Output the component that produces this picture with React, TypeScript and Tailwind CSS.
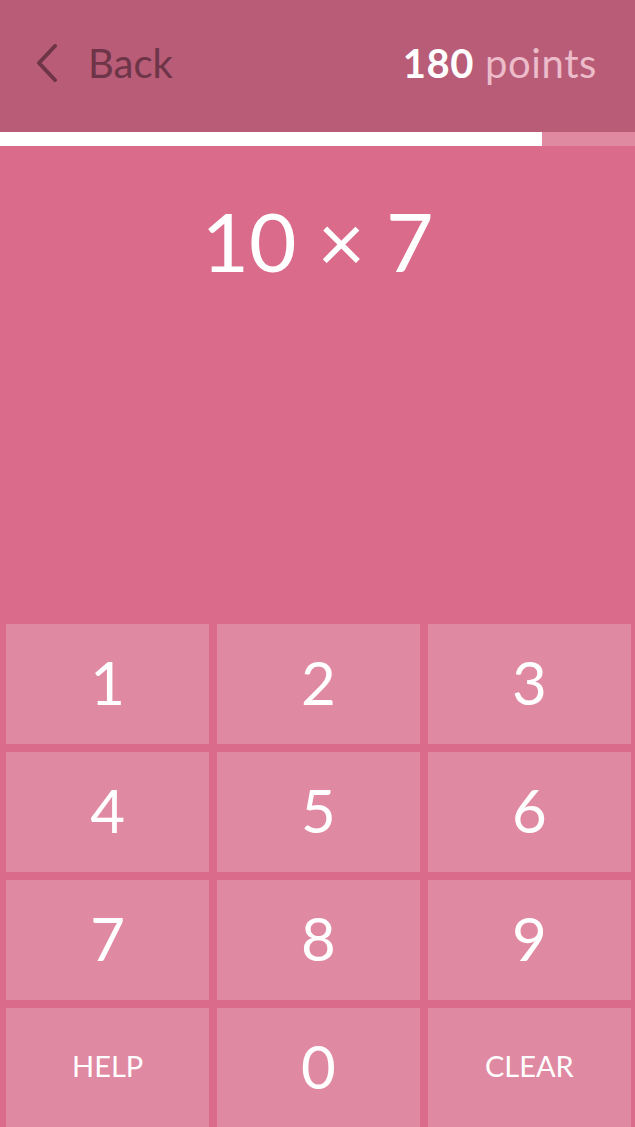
const KEYS = ["1", "2", "3", "4", "5", "6", "7", "8", "9", "HELP", "0", "CLEAR"];

const App = () => {
  return (
    <div
      className="h-[1127px] w-[635px] overflow-hidden bg-[#da6b8b]"
      style={{ fontFamily: "Lato, 'Open Sans', sans-serif" }}
    >
      {/* HEADER */}
      <div className="flex h-[132px] items-center justify-between bg-[#b85c77] pl-[35px] pr-[38px] pb-[6px]">
        <div className="flex items-center gap-[29px] text-[#6e3447]">
          <svg width="24" height="38" viewBox="0 0 24 38" fill="none">
            <path d="M20 2 L4 19 L20 36" stroke="#6e3447" strokeWidth="4" strokeLinecap="round" strokeLinejoin="round" />
          </svg>
          <span className="text-[40px] leading-none">Back</span>
        </div>
        <div className="text-[40px] leading-none tracking-[0.6px]">
          <span className="font-bold text-white">180</span>{" "}
          <span className="text-[#ecbccb]">points</span>
        </div>
      </div>

      {/* PROGRESS */}
      <div className="flex h-[14px] bg-[#e08aa2]">
        <div className="h-full w-[542px] bg-white" />
      </div>

      {/* QUESTION */}
      <div className="flex h-[478px] justify-center pt-[53px]">
        <span className="text-[82px] leading-none text-white">10 × 7</span>
      </div>

      {/* KEYPAD */}
      <div className="grid grid-cols-3 gap-x-[7.5px] gap-y-[8px] pl-[6px] pr-[4px]">
        {KEYS.map((k) => (
          <div
            key={k}
            className="flex h-[120px] items-center justify-center bg-[#e089a2] pb-[4px] text-white"
          >
            <span className={k.length > 1 ? "text-[29px]" : "text-[60px] leading-none"}>{k}</span>
          </div>
        ))}
      </div>
    </div>
  );
};

export default App;
